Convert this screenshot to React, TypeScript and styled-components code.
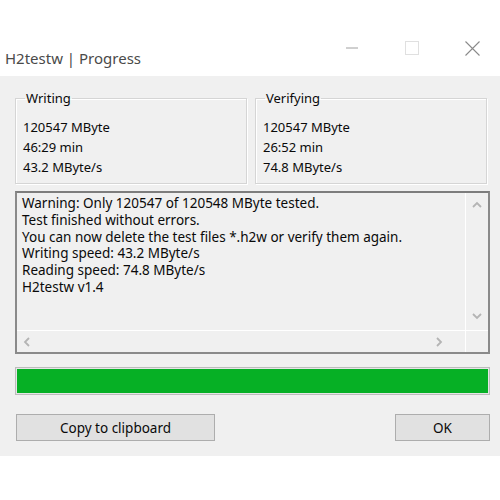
import React from "react";
import styled, { createGlobalStyle } from "styled-components";

const Global = createGlobalStyle`
  html, body { margin: 0; padding: 0; background: #ffffff; }
  body { font-family: "Noto Sans", "Open Sans", sans-serif; }
`;

const Window = styled.div`
  width: 500px;
  height: 500px;
  overflow: hidden;
  background: #ffffff;
  display: flex;
  flex-direction: column;
`;

const TitleBar = styled.div`
  height: 76px;
  display: flex;
  align-items: flex-end;
  justify-content: space-between;
  padding-left: 5px;
  box-sizing: border-box;
`;

const Title = styled.div`
  font-family: "Noto Sans", sans-serif;
  font-size: 15px;
  color: #4a4a4a;
  line-height: 20px;
  padding-bottom: 8px;
`;

const Controls = styled.div`
  display: flex;
  margin-right: -2px;
  height: 46px;
  align-items: center;
  padding-bottom: 10px;
  box-sizing: border-box;
`;

const CaptionButton = styled.div`
  width: 60px;
  height: 30px;
  display: flex;
  align-items: center;
  justify-content: center;
`;

const Body = styled.div`
  background: #f0f0f0;
  height: 380px;
  box-sizing: border-box;
  padding: 14px 11px 0 15px;
  display: flex;
  flex-direction: column;
`;

const GroupRow = styled.div`
  display: grid;
  grid-template-columns: 232px 232px;
  column-gap: 8px;
`;

const Group = styled.fieldset`
  margin: 0;
  height: 94px;
  box-sizing: border-box;
  border: 1px solid #d5d5d5;
  box-shadow: inset 1px 1px 0 #ffffff, 1px 1px 0 #ffffff;
  padding: 0 0 0 8px;
  font-size: 13px;
  color: #0a0a0a;
  min-width: 0;
`;

const Legend = styled.legend`
  padding: 0 1px;
  margin-left: 1px;
  font-size: 13px;
  line-height: 17px;
  color: #0a0a0a;
`;

const Value = styled.div`
  line-height: 20px;
  white-space: nowrap;
`;

const Values = styled.div`
  padding-top: 10px;
  margin-left: -1px;
`;

const LogBox = styled.div`
  margin-top: 7px;
  height: 163px;
  box-sizing: border-box;
  border: 2px solid #8a8a8a;
  border-top-color: #7d7d7d;
  display: grid;
  grid-template-columns: 1fr 22px;
  grid-template-rows: 1fr 21px;
  width: 475px;
`;

const LogText = styled.div`
  padding: 2px 0 0 5px;
  font-size: 13.5px;
  line-height: 16.8px;
  color: #0a0a0a;
  white-space: nowrap;
  overflow: hidden;
  border-right: 1px solid #ffffff;
  border-bottom: 1px solid #ffffff;
`;

const VScroll = styled.div`
  display: flex;
  flex-direction: column;
  justify-content: space-between;
  align-items: center;
  padding: 8px 0 10px;
  border-bottom: 1px solid #ffffff;
`;

const HScroll = styled.div`
  display: flex;
  justify-content: space-between;
  align-items: center;
  padding: 0 22px 0 6px;
  border-right: 1px solid #ffffff;
`;

const Corner = styled.div`
  background: #f0f0f0;
`;

const Progress = styled.div`
  margin-top: 13px;
  width: 475px;
  height: 28px;
  box-sizing: border-box;
  border: 1px solid #bcbcbc;
  background: #e6e6e6;
  padding: 1px;
`;

const ProgressFill = styled.div`
  height: 100%;
  background: #06b025;
`;

const ButtonRow = styled.div`
  margin-top: 19px;
  width: 474px;
  display: flex;
  justify-content: space-between;
  padding-left: 1px;
`;

const Button = styled.button<{ $w: number }>`
  width: ${(p) => p.$w}px;
  height: 27px;
  box-sizing: border-box;
  background: #e1e1e1;
  border: 1px solid #adadad;
  font-family: "Noto Sans", sans-serif;
  font-size: 13.5px;
  color: #0a0a0a;
  padding: 0;
  line-height: 24px;
`;

const Chevron = ({ dir }: { dir: "up" | "down" | "left" | "right" }) => {
  const d = {
    up: "M1 6 L5 2 L9 6",
    down: "M1 2 L5 6 L9 2",
    left: "M6 1 L2 5 L6 9",
    right: "M2 1 L6 5 L2 9",
  }[dir];
  const horiz = dir === "up" || dir === "down";
  return (
    <svg width={horiz ? 10 : 8} height={horiz ? 8 : 10} viewBox={horiz ? "0 0 10 8" : "0 0 8 10"}>
      <path d={d} fill="none" stroke="#b4b4b4" strokeWidth="1.8" />
    </svg>
  );
};

const lines = [
  "Warning: Only 120547 of 120548 MByte tested.",
  "Test finished without errors.",
  "You can now delete the test files *.h2w or verify them again.",
  "Writing speed: 43.2 MByte/s",
  "Reading speed: 74.8 MByte/s",
  "H2testw v1.4",
];

export default function App() {
  return (
    <>
      <Global />
      <Window>
        <TitleBar>
          <Title>H2testw | Progress</Title>
          <Controls>
            <CaptionButton>
              <svg width="12" height="2" viewBox="0 0 12 2">
                <line x1="0" y1="1" x2="12" y2="1" stroke="#a0a0a0" strokeWidth="1" />
              </svg>
            </CaptionButton>
            <CaptionButton>
              <svg width="14" height="14" viewBox="0 0 14 14">
                <rect x="0.5" y="0.5" width="13" height="13" fill="none" stroke="#e0e0e0" strokeWidth="1" />
              </svg>
            </CaptionButton>
            <CaptionButton>
              <svg width="15" height="15" viewBox="0 0 15 15">
                <path d="M0.5 0.5 L14.5 14.5 M14.5 0.5 L0.5 14.5" stroke="#8a8a8a" strokeWidth="1.1" />
              </svg>
            </CaptionButton>
          </Controls>
        </TitleBar>
        <Body>
          <GroupRow>
            <Group>
              <Legend>Writing</Legend>
              <Values>
                <Value>120547 MByte</Value>
                <Value>46:29 min</Value>
                <Value>43.2 MByte/s</Value>
              </Values>
            </Group>
            <Group>
              <Legend>Verifying</Legend>
              <Values>
                <Value>120547 MByte</Value>
                <Value>26:52 min</Value>
                <Value>74.8 MByte/s</Value>
              </Values>
            </Group>
          </GroupRow>
          <LogBox>
            <LogText>
              {lines.map((l) => (
                <div key={l}>{l}</div>
              ))}
            </LogText>
            <VScroll>
              <Chevron dir="up" />
              <Chevron dir="down" />
            </VScroll>
            <HScroll>
              <Chevron dir="left" />
              <Chevron dir="right" />
            </HScroll>
            <Corner />
          </LogBox>
          <Progress>
            <ProgressFill style={{ width: "100%" }} />
          </Progress>
          <ButtonRow>
            <Button $w={199}>Copy to clipboard</Button>
            <Button $w={95}>OK</Button>
          </ButtonRow>
        </Body>
      </Window>
    </>
  );
}
